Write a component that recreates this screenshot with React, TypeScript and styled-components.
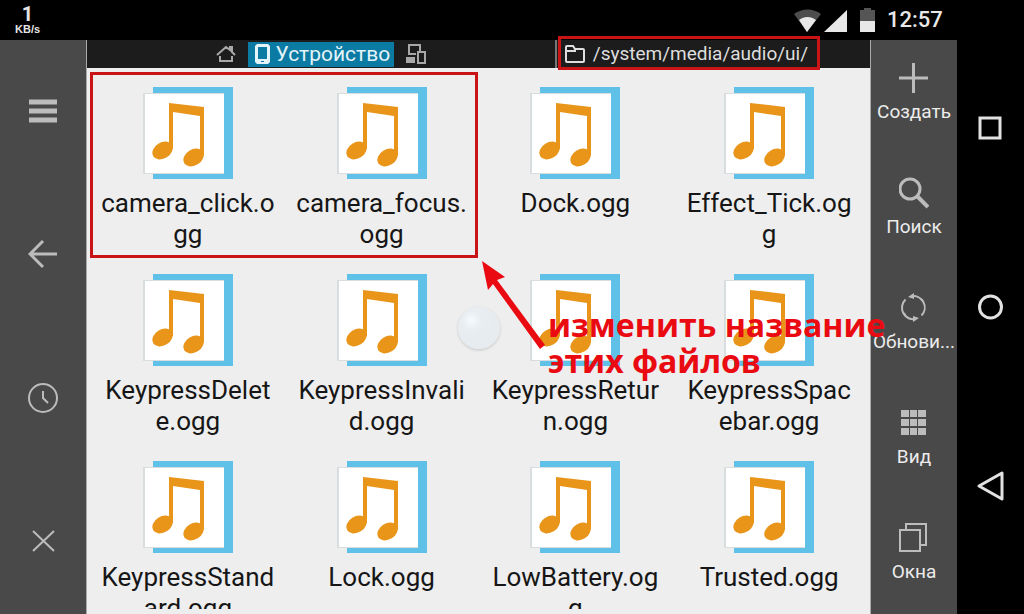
import React from "react";
import styled, { createGlobalStyle } from "styled-components";

const GlobalStyle = createGlobalStyle`
  *, *::before, *::after { box-sizing: border-box; }
  body { margin: 0; background: #000; }
  button { font: inherit; color: inherit; background: none; border: 0; padding: 0; margin: 0; cursor: pointer; }
`;

const Screen = styled.div`
  position: relative;
  display: flex;
  height: 100vh;
  overflow: hidden;
  background: #000;
  font-family: Roboto, "Liberation Sans", sans-serif;
`;

const Device = styled.div`
  flex: 1;
  min-width: 0;
  display: flex;
  flex-direction: column;
`;

const StatusBar = styled.header`
  flex: none;
  height: 40px;
  display: flex;
  align-items: center;
  justify-content: space-between;
  padding-left: 15px;
`;

const Speed = styled.div`
  display: flex;
  flex-direction: column;
  align-items: center;
  color: #e4e4e4;
  font-family: "Liberation Sans", sans-serif;
  font-weight: 700;
`;

const SpeedValue = styled.span`
  font-family: Roboto, sans-serif;
  font-size: 20px;
  line-height: 18px;
`;

const SpeedUnit = styled.span`
  font-size: 11px;
  line-height: 12px;
`;

const StatusIcons = styled.div`
  display: flex;
  align-items: center;
  color: #e8e8e8;
`;

const Clock = styled.time`
  width: 72px;
  padding-left: 2px;
  font-size: 22px;
  font-weight: 500;
  line-height: 40px;
`;

const Workspace = styled.div`
  flex: 1;
  min-height: 0;
  display: flex;
`;

const Rail = styled.nav`
  flex: none;
  width: 86px;
  display: flex;
  flex-direction: column;
  background: #494949;
  color: #bcbcbc;
`;

const RailButton = styled.button<{ $labelled?: boolean }>`
  && {
    flex: 1;
    display: flex;
    flex-direction: column;
    align-items: center;
    justify-content: center;
    gap: 4px;
    min-height: 0;
    padding-bottom: ${(p) => (p.$labelled ? 8 : 0)}px;
  }
`;

const RailLabel = styled.span`
  color: #ececec;
  font-size: 19px;
  line-height: 24px;
  white-space: nowrap;
`;

const Browser = styled.main`
  flex: 1;
  min-width: 0;
  display: flex;
  flex-direction: column;
  background: #eee;
  border-left: 1px solid #aaa;
  border-right: 1px solid #aaa;
  padding-bottom: 5px;
`;

const TabBar = styled.div`
  flex: none;
  height: 28px;
  display: grid;
  grid-template-columns: 3fr 2fr;
  background: #1c1c1c;
  color: #a8a8a8;
`;

const Tabs = styled.div`
  display: flex;
  align-items: center;
  justify-content: center;
  gap: 12px;
  border-right: 2px solid #777;
`;

const IconTab = styled.button`
  display: flex;
`;

const ActiveTab = styled.button`
  && {
    display: flex;
    align-items: center;
    gap: 6px;
    height: 25px;
    padding: 0 4px 0 7px;
    background: #0b7ba3;
    color: #e4f4fa;
    font-size: 21px;
    line-height: 25px;
  }
`;

const PathLink = styled.a`
  display: flex;
  align-items: center;
  gap: 8px;
  padding-left: 8px;
  color: #dedede;
  font-size: 19px;
  line-height: 28px;
  text-decoration: none;
  white-space: nowrap;
`;

const FileGrid = styled.section`
  flex: 1;
  min-height: 0;
  overflow: hidden;
  display: grid;
  grid-template-columns: repeat(4, 1fr);
  grid-auto-rows: 187px;
  padding: 19px 4px 0;
`;

const FileItem = styled.button`
  && {
    display: flex;
    flex-direction: column;
    align-items: center;
    gap: 8px;
    padding: 0 10px;
    min-width: 0;
  }
`;

const FileName = styled.span`
  width: 100%;
  color: #161616;
  font-size: 26px;
  line-height: 31px;
  text-align: center;
  word-break: break-all;
`;

const SystemNav = styled.nav`
  flex: none;
  width: 67px;
  display: flex;
  flex-direction: column;
  padding: 38px 0;
  color: #e2e2e2;
`;

const Frame = styled.div<{ $x: number; $y: number; $w: number; $h: number }>`
  position: absolute;
  left: ${(p) => p.$x}px;
  top: ${(p) => p.$y}px;
  width: ${(p) => p.$w}px;
  height: ${(p) => p.$h}px;
  border: 3px solid #c81414;
  pointer-events: none;
`;

const TouchDot = styled.div`
  position: absolute;
  left: 458px;
  top: 307px;
  width: 42px;
  height: 42px;
  border-radius: 50%;
  background: radial-gradient(circle at 32% 32%, #f7fafc 0, #e8edf1 25%, #e4eaee 100%);
  box-shadow: 0 1px 3px rgba(0, 0, 0, 0.18);
`;

const Arrow = styled.svg`
  position: absolute;
  left: 478px;
  top: 258px;
  pointer-events: none;
`;

const Note = styled.p`
  position: absolute;
  left: 548px;
  top: 307px;
  margin: 0;
  color: #e90a12;
  font-family: "Open Sans", "Noto Sans", sans-serif;
  font-size: 32px;
  font-weight: 700;
  line-height: 36px;
  white-space: nowrap;
  pointer-events: none;
`;

const MusicIcon = () => (
  <svg width="92" height="93" viewBox="0 0 92 93" aria-hidden="true">
    <path d="M11 0h80v92H11z" fill="#5fc0e8" />
    <path d="M1 6h81v81H1z" fill="#d8dde0" />
    <path d="M3 7h79v79H3z" fill="#fff" />
    <g fill="#e8951a">
      <path d="M27 16 62 20V68H58V29L31 25V62H27z" />
      <ellipse cx="20.500" cy="63.500" rx="11" ry="8" transform="rotate(-32 20.500 63.500)" />
      <ellipse cx="51.500" cy="70.500" rx="11" ry="8" transform="rotate(-32 51.500 70.500)" />
      <path d="M27 54h4v5q0 3-2 5zM58 61h4v5q0 3-2 5z" />
    </g>
  </svg>
);

const files = [
  "camera_click.ogg",
  "camera_focus.ogg",
  "Dock.ogg",
  "Effect_Tick.ogg",
  "KeypressDelete.ogg",
  "KeypressInvalid.ogg",
  "KeypressReturn.ogg",
  "KeypressSpacebar.ogg",
  "KeypressStandard.ogg",
  "Lock.ogg",
  "LowBattery.ogg",
  "Trusted.ogg",
];

const stroke = (width: number) => ({ fill: "none", stroke: "currentColor", strokeWidth: width });

const leftActions = [
  { label: "Меню", icon: <path d="M1 7h28M1 16h28M1 25h28" {...stroke(5)} /> },
  { label: "Назад", icon: <path d="M29 16H2M15 3 2 16l13 13" {...stroke(3)} /> },
  {
    label: "История",
    icon: (
      <g {...stroke(2)}>
        <circle cx="15" cy="16" r="14" />
        <path d="M15 9v7l5 5" />
      </g>
    ),
  },
  { label: "Закрыть", icon: <path d="m5 6 21 20M26 6 5 26" {...stroke(2)} /> },
];

const rightActions = [
  { label: "Создать", icon: <path d="M14.500 1v30M0 16h29" {...stroke(3)} /> },
  {
    label: "Поиск",
    icon: (
      <g {...stroke(3)}>
        <circle cx="11" cy="12" r="10" />
        <path d="m18 19 11 11" strokeWidth="4" />
      </g>
    ),
  },
  {
    label: "Обнови...",
    icon: (
      <g>
        <path d="M6.500 7.500A11.500 11.500 0 0 0 17 27M22.500 23.500A11.500 11.500 0 0 0 12 4.200" {...stroke(2)} />
        <path d="M6.500 23.500A11.500 11.500 0 0 1 5 21M24 9A11.500 11.500 0 0 0 22 7" {...stroke(2)} />
        <path d="m9 5 6-4v6zM20 26l-6 4v-6z" fill="currentColor" />
      </g>
    ),
  },
  {
    label: "Вид",
    icon: (
      <path
        d="M2 3h8v7H2zM11 3h7v7h-7zM19 3h8v7h-8zM2 12h8v7H2zM11 12h7v7h-7zM19 12h8v7h-8zM2 21h8v7H2zM11 21h7v7h-7zM19 21h8v7h-8z"
        fill="currentColor"
      />
    ),
  },
  { label: "Окна", icon: <path d="M1 8h20v21H1zM7 8V2h20v21h-6" {...stroke(2)} /> },
];

const systemActions = [
  { label: "Обзор", icon: <rect x="5" y="6" width="20" height="20" {...stroke(3)} /> },
  { label: "Домой", icon: <circle cx="15.500" cy="16" r="11" {...stroke(3)} /> },
  { label: "Назад", icon: <path d="M27 3v26L4 16z" strokeLinejoin="round" {...stroke(3)} /> },
];

export default function App() {
  return (
    <>
      <GlobalStyle />
      <Screen>
        <Device>
          <StatusBar>
            <Speed>
              <SpeedValue>1</SpeedValue>
              <SpeedUnit>KB/s</SpeedUnit>
            </Speed>
            <StatusIcons>
              <svg width="92" height="26" viewBox="0 0 92 26" aria-hidden="true">
                <path d="M1 7C9 1 20 1 28 7L14 25z" fill="#4d4d4d" />
                <path d="M6 13c5-4 12-4 17 0l-9 12z" fill="currentColor" />
                <path d="M54 3v22H31z" fill="currentColor" />
                <path d="M67 3h4V1h7v2h4v22H67z" fill="#555" />
                <path d="M67 14h15v11H67z" fill="currentColor" />
              </svg>
              <Clock>12:57</Clock>
            </StatusIcons>
          </StatusBar>
          <Workspace>
            <Rail>
              {leftActions.map((a) => (
                <RailButton key={a.label} aria-label={a.label}>
                  <svg width="30" height="34" viewBox="0 0 30 34" aria-hidden="true">{a.icon}</svg>
                </RailButton>
              ))}
            </Rail>
            <Browser>
              <TabBar>
                <Tabs>
                  <IconTab aria-label="Домашняя папка">
                    <svg width="20" height="20" viewBox="0 0 20 20" aria-hidden="true">
                      <path d="m1 11 9-8 4 3V3h2v5l3 3M4 12v5h12v-5" {...stroke(2)} />
                    </svg>
                  </IconTab>
                  <ActiveTab>
                    <svg width="15" height="20" viewBox="0 0 15 20" aria-hidden="true">
                      <path d="M2 0h11l2 2v16l-2 2H2l-2-2V2zM3 3v12h9V3z" fill="currentColor" fillRule="evenodd" />
                      <path d="M6 17h3v1H6z" fill="#0b7ba3" />
                    </svg>
                    Устройство
                  </ActiveTab>
                  <IconTab aria-label="Сеть">
                    <svg width="20" height="22" viewBox="0 0 20 22" aria-hidden="true">
                      <path d="M3 12V2h11v6M2 11h8" {...stroke(2)} />
                      <path d="M0 14h9v6H0z" fill="currentColor" />
                      <path d="M12 9h7v11h-7z" {...stroke(2)} />
                    </svg>
                  </IconTab>
                </Tabs>
                <PathLink href="#ui">
                  <svg width="20" height="20" viewBox="0 0 20 20" aria-hidden="true">
                    <path d="M1 17V3q0-1 1-1h6l2 3h8q1 0 1 1v11q0 1-1 1H2q-1 0-1-1zM1 7h9V5" {...stroke(2)} />
                  </svg>
                  /system/media/audio/ui/
                </PathLink>
              </TabBar>
              <FileGrid>
                {files.map((name) => (
                  <FileItem key={name}>
                    <MusicIcon />
                    <FileName>{name}</FileName>
                  </FileItem>
                ))}
              </FileGrid>
            </Browser>
            <Rail>
              {rightActions.map((a) => (
                <RailButton key={a.label} $labelled>
                  <svg width="30" height="34" viewBox="0 0 30 34" aria-hidden="true">{a.icon}</svg>
                  <RailLabel>{a.label}</RailLabel>
                </RailButton>
              ))}
            </Rail>
          </Workspace>
        </Device>
        <SystemNav>
          {systemActions.map((a) => (
            <RailButton key={a.label} aria-label={a.label}>
              <svg width="32" height="32" viewBox="0 0 32 32" aria-hidden="true">{a.icon}</svg>
            </RailButton>
          ))}
        </SystemNav>
        <TouchDot />
        <Frame $x={90} $y={72} $w={388} $h={186} />
        <Frame $x={558} $y={36} $w={262} $h={34} />
        <Arrow width="70" height="94" viewBox="0 0 70 94" aria-hidden="true">
          <path d="M4 3 27 19 19 22 67 87 62 91 15 26 10 32z" fill="#e90a12" />
        </Arrow>
        <Note>
          изменить название
          <br />
          этих файлов
        </Note>
      </Screen>
    </>
  );
}
